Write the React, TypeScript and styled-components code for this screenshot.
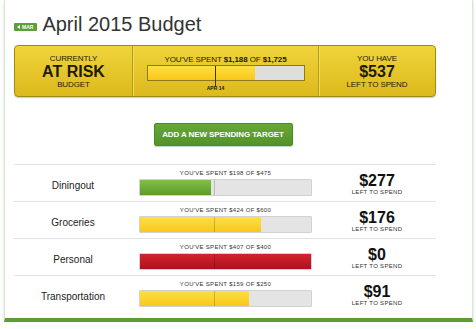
import styled, { createGlobalStyle } from 'styled-components';

const GlobalStyle = createGlobalStyle`
  html, body {
    margin: 0;
    padding: 0;
    background: #ffffff;
    font-family: "Liberation Sans", Arial, sans-serif;
  }
`;

const Card = styled.div`
  box-sizing: border-box;
  margin-left: 4px;
  width: 469px;
  height: 322px;
  padding: 13px 0 0 9px;
  border-left: 1px solid #d6e9cb;
  border-right: 1px solid #d6e9cb;
  border-bottom: 4px solid #5c9e33;
  box-shadow: 0 2px 3px rgba(0, 0, 0, 0.15);
  background: #fff;
`;

const Content = styled.div`
  width: 422px;
`;

const Header = styled.div`
  display: flex;
  align-items: center;
  gap: 5px;
  height: 22px;
`;

const MonthBadge = styled.span`
  display: inline-flex;
  align-items: center;
  gap: 2px;
  height: 8px;
  margin-top: 5px;
  padding: 0 4px 0 3px;
  background: #5c9f35;
  border-radius: 1px;
  color: #fff;
  font-size: 5px;
  font-weight: bold;
  line-height: 8px;

  &::before {
    content: '';
    border-top: 2px solid transparent;
    border-bottom: 2px solid transparent;
    border-right: 3px solid #fff;
  }
`;

const Title = styled.h1`
  margin: 0;
  font-size: 20px;
  font-weight: normal;
  color: #333;
  line-height: 22px;
`;

const Banner = styled.div`
  box-sizing: border-box;
  margin-top: 10px;
  height: 52px;
  display: grid;
  grid-template-columns: 117px 186px 1fr;
  border: 1px solid #a08914;
  border-radius: 4px;
  background: linear-gradient(#efd43a, #dcb91c);
  box-shadow: 0 1px 1px rgba(0, 0, 0, 0.2);
  color: #1d1a08;
`;

const BannerCell = styled.div<{ $divider?: boolean }>`
  display: flex;
  flex-direction: column;
  align-items: center;
  justify-content: center;
  border-left: ${({ $divider }) => ($divider ? '1px solid #b49c1a' : 'none')};
  box-shadow: ${({ $divider }) => ($divider ? 'inset 1px 0 0 #f3dc5a' : 'none')};
`;

const SmallCaps = styled.div`
  font-size: 8px;
  line-height: 9px;
  letter-spacing: -0.1px;
`;

const BigStatus = styled.div`
  font-size: 16px;
  font-weight: bold;
  line-height: 17px;
`;

const BannerMiddle = styled.div`
  display: flex;
  flex-direction: column;
  align-items: center;
  padding-top: 9px;
  border-left: 1px solid #b49c1a;
  box-shadow: inset 1px 0 0 #f3dc5a;
`;

const BannerBar = styled.div`
  position: relative;
  box-sizing: border-box;
  margin-top: 1px;
  width: 158px;
  height: 16px;
  border: 1px solid #8d7a1c;
  background: #dedede;
`;

const Fill = styled.div<{ $kind: 'green' | 'yellow' | 'red' }>`
  height: 100%;
  background: ${({ $kind }) =>
    $kind === 'green'
      ? 'linear-gradient(#82bf45, #5c9b2b)'
      : $kind === 'red'
      ? 'linear-gradient(#d2222f, #b0111e)'
      : 'linear-gradient(#ffdf40, #f7c81c)'};
`;

const TodayMarker = styled.div<{ $long?: boolean }>`
  position: absolute;
  top: 0;
  left: 43%;
  width: 1px;
  height: ${({ $long }) => ($long ? '21px' : '100%')};
  background: ${({ $long }) => ($long ? '#3a3306' : 'rgba(0, 0, 0, 0.18)')};
`;

const DateTag = styled.div`
  margin-top: 4px;
  margin-left: -20px;
  font-size: 5px;
  font-weight: bold;
  line-height: 6px;
`;

const ButtonRow = styled.div`
  display: flex;
  justify-content: center;
  margin: 26px 0 18px;
`;

const AddButton = styled.button`
  box-sizing: border-box;
  height: 23px;
  width: 139px;
  padding: 0;
  margin-right: 4px;
  border: 1px solid #4c8a24;
  border-radius: 2px;
  background: linear-gradient(#66a935, #53922a);
  box-shadow: 0 1px 1px rgba(0, 0, 0, 0.2);
  color: #fff;
  font-family: "Liberation Sans", Arial, sans-serif;
  font-size: 8px;
  font-weight: bold;
  letter-spacing: -0.1px;
`;

const TargetRow = styled.div`
  height: 37px;
  box-sizing: border-box;
  display: grid;
  grid-template-columns: 118px 186px 1fr;
  border-top: 1px solid #e2e2e2;
`;

const TargetName = styled.div`
  display: flex;
  align-items: center;
  justify-content: center;
  padding-top: 4px;
  font-size: 10px;
  color: #222;
`;

const TargetMiddle = styled.div`
  display: flex;
  flex-direction: column;
  padding: 4px 0 0 7px;
`;

const Caption = styled.div`
  width: 173px;
  text-align: center;
  font-size: 6px;
  line-height: 8px;
  letter-spacing: 0.3px;
  color: #333;
  margin-bottom: 2px;
`;

const TargetBar = styled.div`
  position: relative;
  box-sizing: border-box;
  width: 173px;
  height: 17px;
  border: 1px solid #d2d2d2;
  border-radius: 1px;
  background: #e4e4e4;
`;

const Amount = styled.div`
  display: flex;
  flex-direction: column;
  align-items: center;
  justify-content: center;
  padding-top: 2px;
  color: #111;
`;

const AmountValue = styled.div`
  font-size: 16px;
  font-weight: bold;
  line-height: 15px;
`;

const AmountNote = styled.div`
  font-size: 6px;
  line-height: 8px;
  letter-spacing: 0.3px;
  color: #333;
`;

type Target = { name: string; spent: number; total: number };

const targets: Target[] = [
  { name: 'Diningout', spent: 198, total: 475 },
  { name: 'Groceries', spent: 424, total: 600 },
  { name: 'Personal', spent: 407, total: 400 },
  { name: 'Transportation', spent: 159, total: 250 },
];

const kindFor = (t: Target): 'green' | 'yellow' | 'red' => {
  const r = t.spent / t.total;
  if (r >= 1) return 'red';
  if (r > 0.5) return 'yellow';
  return 'green';
};

const App = () => {
  const spent = 1188;
  const budget = 1725;

  return (
    <>
      <GlobalStyle />
      <Card>
        <Content>
          <Header>
            <MonthBadge>MAR</MonthBadge>
            <Title>April 2015 Budget</Title>
          </Header>

          <Banner>
            <BannerCell>
              <SmallCaps>CURRENTLY</SmallCaps>
              <BigStatus>AT RISK</BigStatus>
              <SmallCaps>BUDGET</SmallCaps>
            </BannerCell>
            <BannerMiddle>
              <SmallCaps>
                YOU'VE SPENT <b>$1,188</b> OF <b>$1,725</b>
              </SmallCaps>
              <BannerBar>
                <Fill $kind="yellow" style={{ width: `${(spent / budget) * 100}%` }} />
                <TodayMarker $long />
              </BannerBar>
              <DateTag>APR 14</DateTag>
            </BannerMiddle>
            <BannerCell $divider>
              <SmallCaps>YOU HAVE</SmallCaps>
              <BigStatus>$537</BigStatus>
              <SmallCaps>LEFT TO SPEND</SmallCaps>
            </BannerCell>
          </Banner>

          <ButtonRow>
            <AddButton>ADD A NEW SPENDING TARGET</AddButton>
          </ButtonRow>

          {targets.map((t) => (
            <TargetRow key={t.name}>
              <TargetName>{t.name}</TargetName>
              <TargetMiddle>
                <Caption>
                  YOU'VE SPENT ${t.spent} OF ${t.total}
                </Caption>
                <TargetBar>
                  <Fill $kind={kindFor(t)} style={{ width: `${Math.min(1, t.spent / t.total) * 100}%` }} />
                  <TodayMarker />
                </TargetBar>
              </TargetMiddle>
              <Amount>
                <AmountValue>${Math.max(0, t.total - t.spent)}</AmountValue>
                <AmountNote>LEFT TO SPEND</AmountNote>
              </Amount>
            </TargetRow>
          ))}
        </Content>
      </Card>
    </>
  );
};

export default App;
